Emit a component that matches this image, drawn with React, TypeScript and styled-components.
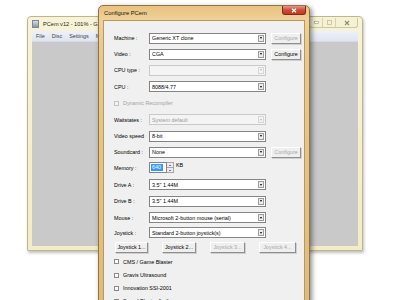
import styled, { createGlobalStyle } from "styled-components";

const GlobalStyle = createGlobalStyle`
  html, body {
    margin: 0;
    padding: 0;
    background: #ffffff;
  }
  body {
    font-family: "Liberation Sans", Arial, sans-serif;
    font-size: 5.4px;
    color: #000;
  }
`;

const Desktop = styled.div`
  position: relative;
  width: 400px;
  height: 300px;
  overflow: hidden;
  background: #ffffff;
`;

/* ---------- background (inactive) PCem window ---------- */

const BgWindow = styled.div`
  position: absolute;
  left: 27px;
  top: 16px;
  width: 336px;
  height: 235px;
  box-sizing: border-box;
  display: flex;
  flex-direction: column;
  padding: 0 4px 4px 4px;
  background: linear-gradient(#f7f4d6, #f1edc4);
  border: 1px solid #bdb68c;
  border-radius: 4px 4px 1px 1px;
  box-shadow: 1px 2px 3px rgba(0, 0, 0, 0.25);
`;

const BgTitleBar = styled.div`
  height: 14px;
  display: flex;
  align-items: center;
  gap: 4px;
  font-size: 5.6px;
  color: #222;
`;

const AppIcon = styled.div`
  width: 5px;
  height: 6px;
  margin-left: 0;
  border: 1px solid #7d8796;
  background: linear-gradient(#d7dde6, #8a95a8);
`;

const CaptionGroup = styled.div`
  margin-left: auto;
  align-self: flex-start;
  display: flex;
  height: 9px;
  margin-top: 1px;
  border: 1px solid #cfc89f;
  border-top: none;
  border-radius: 0 0 3px 3px;
  background: #f5f2d4;
`;

const CaptionBtn = styled.div<{ $w: number }>`
  width: ${(p) => p.$w}px;
  display: flex;
  align-items: center;
  justify-content: center;
  & + & {
    border-left: 1px solid #d8d2ab;
  }
`;

const MenuBar = styled.div`
  height: 10px;
  display: flex;
  align-items: center;
  gap: 7px;
  padding-left: 4px;
  background: linear-gradient(#eef1f9, #dfe4f2);
  color: #444;
  font-size: 5.4px;
`;

const BgClient = styled.div`
  flex: 1;
  background: #c9c9c9;
  border-top: 1px solid #d8dbe4;
`;

/* ---------- Configure PCem dialog ---------- */

const Dialog = styled.div`
  position: absolute;
  left: 98px;
  top: 5px;
  width: 212px;
  height: 320px;
  box-sizing: border-box;
  display: flex;
  flex-direction: column;
  padding: 0 4px 4px 4px;
  background: linear-gradient(#e9c27c 0px, #efd19a 14px, #e9c98e 40px, #dfbb79 100%);
  border: 1px solid #8f7446;
  border-radius: 5px 5px 1px 1px;
  box-shadow: 2px 2px 5px rgba(0, 0, 0, 0.45);
`;

const DlgTitleBar = styled.div`
  height: 14px;
  display: flex;
  align-items: center;
  padding-left: 1px;
  font-size: 5.8px;
  color: #111;
`;

const CloseBtn = styled.div`
  margin-left: auto;
  align-self: flex-start;
  margin-right: -1px;
  width: 24px;
  height: 9px;
  box-sizing: border-box;
  display: flex;
  align-items: center;
  justify-content: center;
  background: linear-gradient(#e59a8a, #cf4c38 50%, #c13a26);
  border: 1px solid #7e2c1e;
  border-top: none;
  border-radius: 0 0 3px 3px;
`;

const DlgClient = styled.div`
  flex: 1;
  background: #f0f0f0;
  border: 1px solid #b9985c;
  padding: 9px 0 0 10px;
  display: flex;
  flex-direction: column;
`;

const Row = styled.div<{ $h: number }>`
  height: ${(p) => p.$h}px;
  display: flex;
  align-items: center;
  flex-shrink: 0;
`;

const Label = styled.div<{ $disabled?: boolean }>`
  width: 35px;
  flex-shrink: 0;
  white-space: nowrap;
  color: ${(p) => (p.$disabled ? "#a0a0a0" : "#000")};
`;

const Combo = styled.div<{ $disabled?: boolean }>`
  width: 117px;
  height: 11px;
  box-sizing: border-box;
  display: flex;
  align-items: center;
  padding-left: 2px;
  border: 1px solid ${(p) => (p.$disabled ? "#c9c9c9" : "#858585")};
  background: ${(p) => (p.$disabled ? "#f4f4f4" : "#ffffff")};
  color: ${(p) => (p.$disabled ? "#9a9a9a" : "#000")};
  white-space: nowrap;
`;

const ComboText = styled.span`
  flex: 1;
  overflow: hidden;
`;

const ArrowBox = styled.div<{ $disabled?: boolean }>`
  width: 6px;
  height: 7px;
  margin-right: 1px;
  box-sizing: border-box;
  display: flex;
  align-items: center;
  justify-content: center;
  background: ${(p) => (p.$disabled ? "#f4f4f4" : "#ececec")};
  border: 1px solid ${(p) => (p.$disabled ? "#d6d6d6" : "#9e9e9e")};
  &::after {
    content: "";
    border-left: 1.5px solid transparent;
    border-right: 1.5px solid transparent;
    border-top: 2px solid ${(p) => (p.$disabled ? "#b5b5b5" : "#000")};
  }
`;

const Button = styled.div<{ $w: number; $disabled?: boolean }>`
  width: ${(p) => p.$w}px;
  height: 11px;
  box-sizing: border-box;
  display: flex;
  align-items: center;
  justify-content: center;
  background: #efefef;
  border: 1px solid;
  border-color: #ffffff #8e8e8e #8e8e8e #ffffff;
  box-shadow: 1px 1px 0 #d0d0d0;
  color: ${(p) => (p.$disabled ? "#a8a8a8" : "#000")};
  white-space: nowrap;
`;

const ConfigureButton = styled(Button)`
  margin-left: 5px;
`;

const JoyButtons = styled.div`
  display: flex;
  gap: 14px;
  padding-left: 1px;
`;

const Check = styled.div<{ $disabled?: boolean }>`
  display: flex;
  align-items: center;
  gap: 4px;
  color: ${(p) => (p.$disabled ? "#a3a3a3" : "#000")};
  white-space: nowrap;
  &::before {
    content: "";
    width: 5px;
    height: 5px;
    box-sizing: border-box;
    border: 1px solid ${(p) => (p.$disabled ? "#c4c4c4" : "#8a8a8a")};
    background: ${(p) => (p.$disabled ? "#f3f3f3" : "#fff")};
  }
`;

const MemoryField = styled.div`
  display: flex;
  align-items: flex-start;
  height: 12px;
`;

const MemInput = styled.div`
  width: 18px;
  height: 11px;
  box-sizing: border-box;
  border: 1px solid #858585;
  background: #fff;
  display: flex;
  align-items: center;
  padding-left: 1px;
`;

const Selected = styled.span`
  background: #3399ff;
  color: #ffffff;
  padding: 0 2px 0 1px;
  line-height: 7px;
`;

const Spinner = styled.div`
  width: 7px;
  height: 11px;
  display: flex;
  flex-direction: column;
`;

const SpinHalf = styled.div<{ $up?: boolean }>`
  flex: 1;
  box-sizing: border-box;
  border: 1px solid #a8a8a8;
  border-left: none;
  background: #ececec;
  display: flex;
  align-items: center;
  justify-content: center;
  & + & {
    border-top: none;
  }
  &::after {
    content: "";
    border-left: 1px solid transparent;
    border-right: 1px solid transparent;
    ${(p) =>
      p.$up ? "border-bottom: 1.5px solid #000;" : "border-top: 1.5px solid #000;"}
  }
`;

const Unit = styled.span`
  margin-left: 2px;
  line-height: 7px;
`;

function Select({ value, disabled }: { value: string; disabled?: boolean }) {
  return (
    <Combo $disabled={disabled}>
      <ComboText>{value}</ComboText>
      <ArrowBox $disabled={disabled} />
    </Combo>
  );
}

export default function App() {
  return (
    <Desktop>
      <GlobalStyle />

      <BgWindow>
        <BgTitleBar>
          <AppIcon />
          <span>PCem v12 - 101% - Generic XT clone</span>
          <CaptionGroup>
            <CaptionBtn $w={12}>
              <svg width="5" height="3" viewBox="0 0 5 3">
                <rect x="0.5" y="0.5" width="4" height="2" fill="#fff" stroke="#a09a76" strokeWidth="0.6" />
              </svg>
            </CaptionBtn>
            <CaptionBtn $w={12}>
              <svg width="5" height="5" viewBox="0 0 5 5">
                <rect x="0.5" y="0.5" width="4" height="4" fill="none" stroke="#c3bd98" strokeWidth="0.8" />
              </svg>
            </CaptionBtn>
            <CaptionBtn $w={21}>
              <svg width="6" height="6" viewBox="0 0 6 6">
                <path d="M1 1 L5 5 M5 1 L1 5" stroke="#8f8a6a" strokeWidth="1.1" />
              </svg>
            </CaptionBtn>
          </CaptionGroup>
        </BgTitleBar>
        <MenuBar>
          <span>File</span>
          <span>Disc</span>
          <span>Settings</span>
          <span>Misc</span>
        </MenuBar>
        <BgClient />
      </BgWindow>

      <Dialog>
        <DlgTitleBar>
          <span>Configure PCem</span>
          <CloseBtn>
            <svg width="6" height="5" viewBox="0 0 6 5">
              <path d="M1 0.7 L5 4.3 M5 0.7 L1 4.3" stroke="#fff" strokeWidth="1.2" />
            </svg>
          </CloseBtn>
        </DlgTitleBar>

        <DlgClient>
          <Row $h={16}>
            <Label>Machine :</Label>
            <Select value="Generic XT clone" />
            <ConfigureButton $w={30} $disabled>Configure</ConfigureButton>
          </Row>
          <Row $h={16}>
            <Label>Video :</Label>
            <Select value="CGA" />
            <ConfigureButton $w={30}>Configure</ConfigureButton>
          </Row>
          <Row $h={16.5}>
            <Label>CPU type :</Label>
            <Select value="" disabled />
          </Row>
          <Row $h={16.5}>
            <Label>CPU :</Label>
            <Select value="8088/4.77" />
          </Row>
          <Row $h={16.5}>
            <Check $disabled>Dynamic Recompiler</Check>
          </Row>
          <Row $h={16.5}>
            <Label>Waitstates :</Label>
            <Select value="System default" disabled />
          </Row>
          <Row $h={16.5}>
            <Label>Video speed</Label>
            <Select value="8-bit" />
          </Row>
          <Row $h={15.5}>
            <Label>Soundcard :</Label>
            <Select value="None" />
            <ConfigureButton $w={30} $disabled>Configure</ConfigureButton>
          </Row>
          <Row $h={16}>
            <Label>Memory :</Label>
            <MemoryField>
              <MemInput>
                <Selected>640</Selected>
              </MemInput>
              <Spinner>
                <SpinHalf $up />
                <SpinHalf />
              </Spinner>
              <Unit>KB</Unit>
            </MemoryField>
          </Row>
          <Row $h={17}>
            <Label>Drive A :</Label>
            <Select value={'3.5" 1.44M'} />
          </Row>
          <Row $h={16.5}>
            <Label>Drive B :</Label>
            <Select value={'3.5" 1.44M'} />
          </Row>
          <Row $h={16}>
            <Label>Mouse :</Label>
            <Select value="Microsoft 2-button mouse (serial)" />
          </Row>
          <Row $h={14.5}>
            <Label>Joystick :</Label>
            <Select value="Standard 2-button joystick(s)" />
          </Row>
          <Row $h={14.5}>
            <JoyButtons>
              <Button $w={33}>Joystick 1...</Button>
              <Button $w={34}>Joystick 2...</Button>
              <Button $w={35} $disabled>Joystick 3...</Button>
              <Button $w={37} $disabled>Joystick 4...</Button>
            </JoyButtons>
          </Row>
          <Row $h={14}>
            <Check>CMS / Game Blaster</Check>
          </Row>
          <Row $h={13}>
            <Check>Gravis Ultrasound</Check>
          </Row>
          <Row $h={13}>
            <Check>Innovation SSI-2001</Check>
          </Row>
          <Row $h={13}>
            <Check>Sound Blaster Audio</Check>
          </Row>
        </DlgClient>
      </Dialog>
    </Desktop>
  );
}
